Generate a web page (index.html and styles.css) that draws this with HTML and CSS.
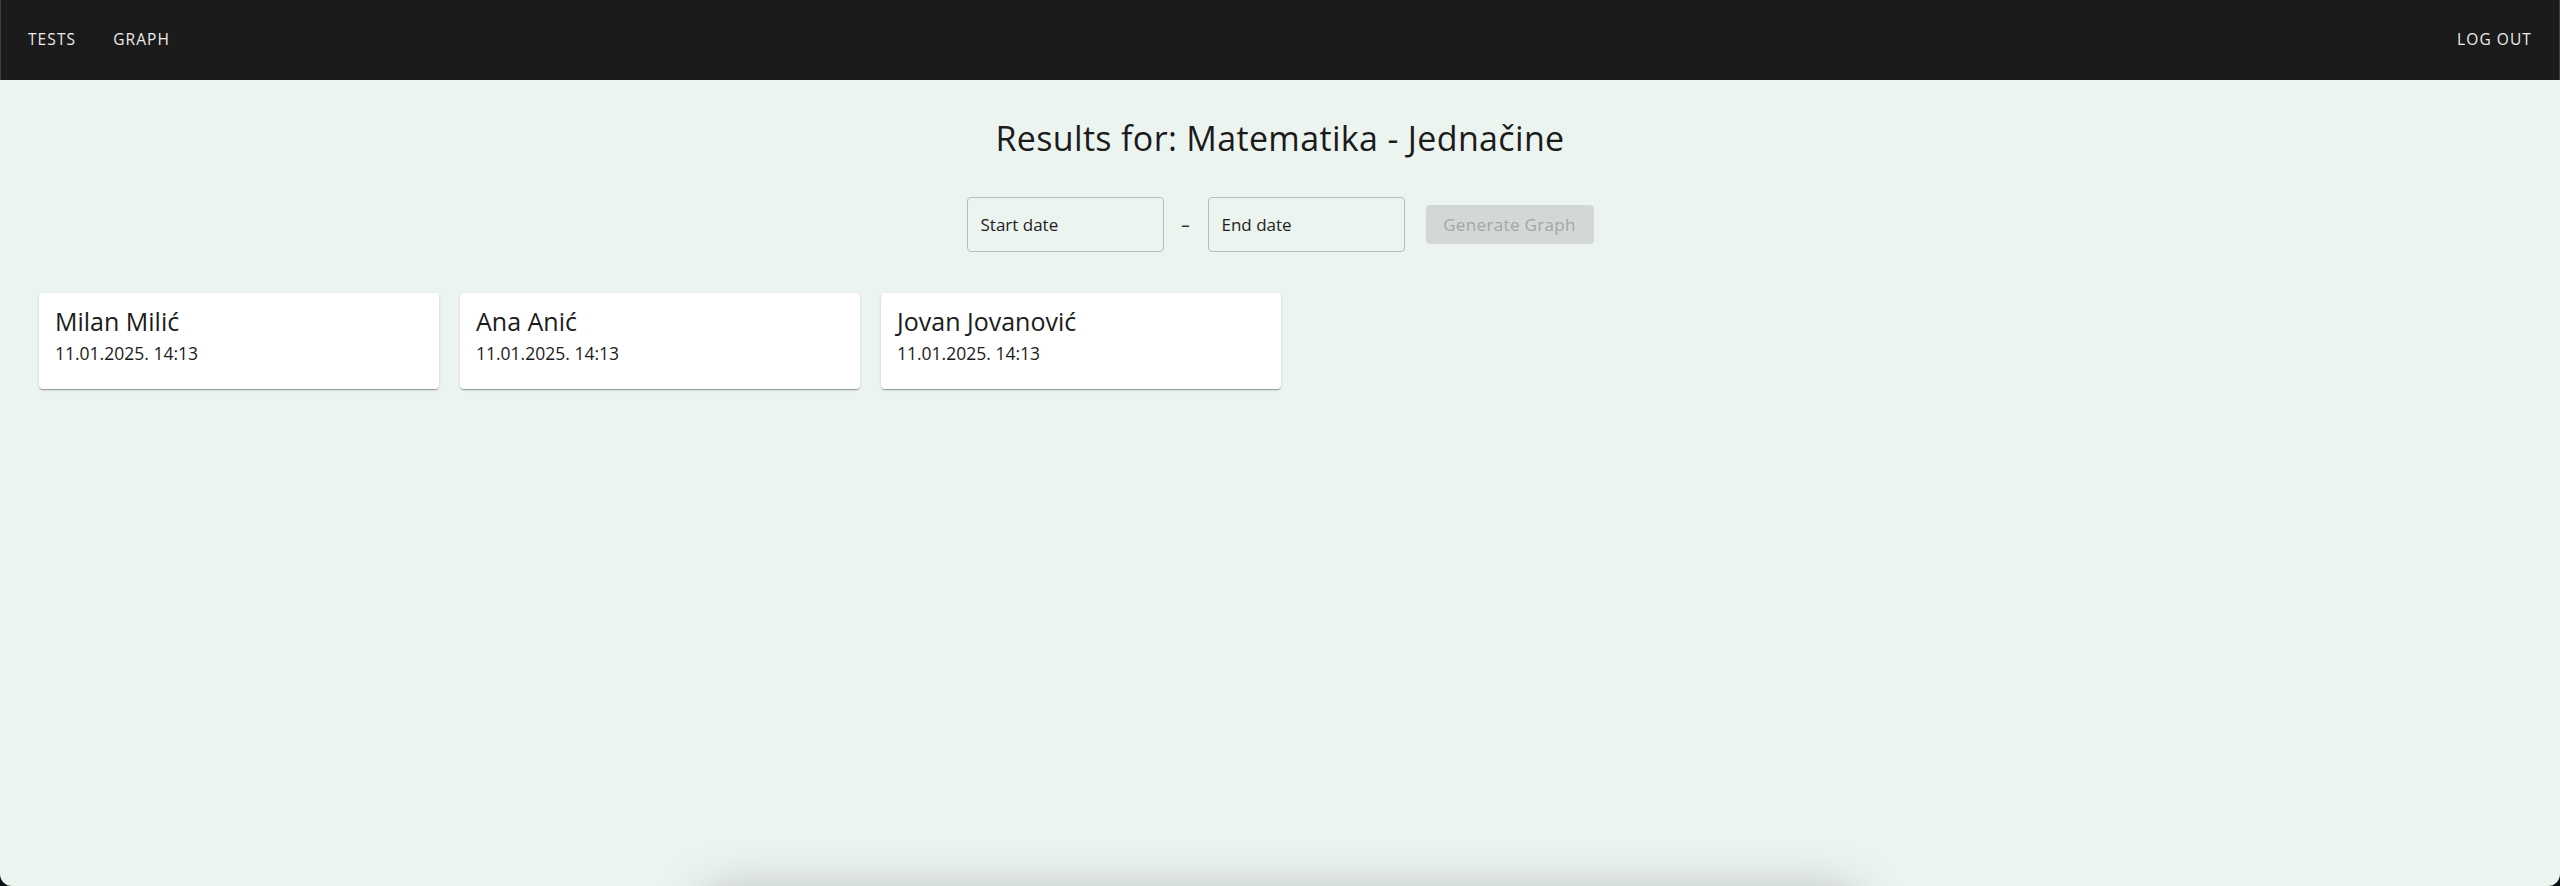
FILE: index.html
```html
<!DOCTYPE html>
<html lang="sr">
<head>
<meta charset="utf-8">
<title>Results</title>
<link rel="stylesheet" href="styles.css">
</head>
<body>
<div class="window">
  <header class="nav">
    <nav class="nav-links">
      <a class="nav-btn" href="#">TESTS</a>
      <a class="nav-btn" href="#">GRAPH</a>
    </nav>
    <a class="nav-btn" href="#">LOG OUT</a>
  </header>
  <main class="content">
    <h1 class="title">Results for: Matematika - Jednačine</h1>
    <div class="filters">
      <div class="date-field">Start date</div>
      <span class="sep">–</span>
      <div class="date-field">End date</div>
      <button class="gen-btn" disabled>Generate Graph</button>
    </div>
    <div class="cards">
      <div class="card">
        <div class="card-name">Milan Milić</div>
        <div class="card-date">11.01.2025. 14:13</div>
      </div>
      <div class="card">
        <div class="card-name">Ana Anić</div>
        <div class="card-date">11.01.2025. 14:13</div>
      </div>
      <div class="card">
        <div class="card-name">Jovan Jovanović</div>
        <div class="card-date">11.01.2025. 14:13</div>
      </div>
    </div>
    <div class="graph-panel"></div>
  </main>
</div>
</body>
</html>
```
FILE: styles.css
```css
html, body {
  margin: 0;
  padding: 0;
  background: #0b0f14;
}
body {
  font-family: "Open Sans", "Liberation Sans", sans-serif;
  color: #1c1c1c;
}
.window {
  height: 886px;
  overflow: hidden;
  border-radius: 0 0 12px 12px;
  background: #ecf4ef;
  display: flex;
  flex-direction: column;
}
.nav {
  height: 80px;
  flex: 0 0 80px;
  box-sizing: border-box;
  background: #1b1b1b;
  border-left: 1px solid #3e3e3e;
  border-right: 1px solid #3e3e3e;
  padding: 0 27px 2px 27px;
  display: flex;
  align-items: center;
  justify-content: space-between;
}
.nav-links {
  display: flex;
  gap: 37px;
}
.nav-btn {
  color: #ececec;
  text-decoration: none;
  font-size: 15.5px;
  letter-spacing: 0.07em;
  font-weight: 500;
}
.content {
  flex: 1;
  padding: 38px 39px 0;
  display: flex;
  flex-direction: column;
}
.title {
  margin: 0;
  text-align: center;
  font-size: 34px;
  font-weight: 500;
  line-height: 1.2;
  letter-spacing: 0.01em;
  color: #1b1b1b;
}
.filters {
  margin-top: 38px;
  display: flex;
  align-items: center;
  justify-content: center;
}
.date-field {
  width: 197px;
  height: 55px;
  box-sizing: border-box;
  border: 1px solid #b7bcb9;
  border-radius: 4px;
  padding: 0 13px;
  display: flex;
  align-items: center;
  font-size: 17px;
  font-weight: 500;
  color: #1e1e1e;
}
.sep {
  width: 44px;
  text-align: center;
  font-size: 17px;
  font-weight: 600;
  color: #333;
}
.gen-btn {
  margin-left: 21px;
  width: 168px;
  height: 39px;
  border: none;
  border-radius: 4px;
  background: #d3d8d6;
  color: #a3a7a5;
  font-family: inherit;
  font-size: 17px;
  font-weight: 500;
  letter-spacing: 0.02em;
  padding: 0;
}
.cards {
  margin-top: 41px;
  display: flex;
  gap: 21px;
}
.card {
  width: 400px;
  height: 96px;
  box-sizing: border-box;
  background: #ffffff;
  border-radius: 4px;
  padding: 12px 16px;
  box-shadow: 0 2px 1px -1px rgba(0,0,0,0.2), 0 1px 1px 0 rgba(0,0,0,0.14), 0 1px 3px 0 rgba(0,0,0,0.12);
}
.card-name {
  font-size: 25px;
  line-height: 32px;
  color: #1b1b1b;
}
.card-date {
  margin-top: 2px;
  font-size: 17.5px;
  font-weight: 500;
  line-height: 28px;
  color: #1b1b1b;
}
.graph-panel {
  margin: 505px auto 0;
  width: 1150px;
  height: 400px;
  flex: 0 0 400px;
  background: #ecf4ef;
  border-radius: 8px;
  box-shadow: 0 0 50px rgba(0,0,0,0.26);
}
```
